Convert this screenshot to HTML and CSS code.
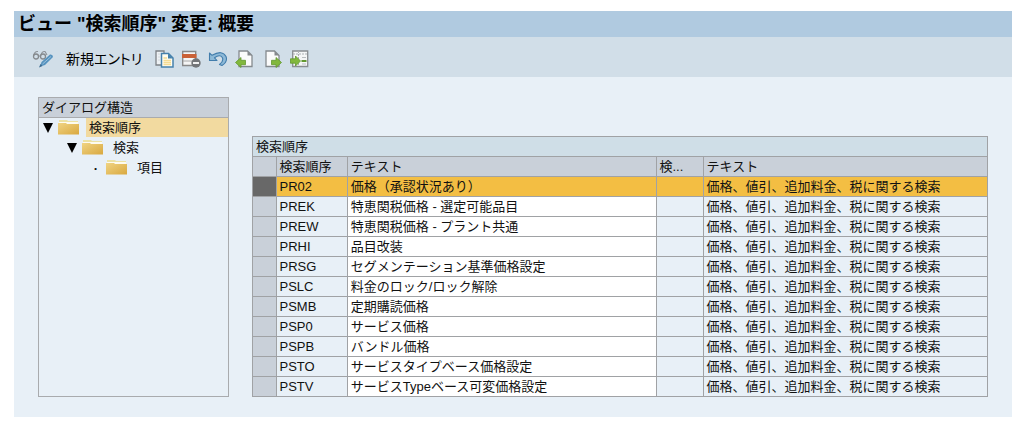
FILE: index.html
```html
<!DOCTYPE html>
<html lang="ja">
<head>
<meta charset="utf-8">
<title>ビュー "検索順序" 変更: 概要</title>
<link rel="stylesheet" href="styles.css">
</head>
<body>
<svg class="defs" aria-hidden="true">
  <linearGradient id="gold" x1="0" y1="0" x2="1" y2="1"><stop offset="0" stop-color="#f0d483"/><stop offset="1" stop-color="#d9a83f"/></linearGradient>
  <symbol id="folder" viewBox="0 0 21 17">
    <path d="M1 3V1h8l1 1h10v3H1z" fill="#ece2a4"/>
    <path d="M1 3h19v3H1z" fill="#fdfbf0"/>
    <path d="M0 4h8l1 1h12v10.500H0z" fill="url(#gold)"/>
  </symbol>
</svg>
<div class="window">
  <h1 class="title">ビュー "検索順序" 変更: 概要</h1>
  <div class="toolbar" role="toolbar">
    <button class="tool" aria-label="照会/変更">
      <svg width="22" height="20" viewBox="0 0 22 20" fill="none">
        <path d="M1.500 7Q2.500 2 6 2.500M9 6Q10 2 13 2.500L15 6M6.500 7h2" stroke="#8d9297" stroke-width="1.100"/>
        <circle cx="4" cy="7.500" r="2.500" stroke="#85898d" stroke-width="1.300"/><circle cx="11" cy="7.500" r="2.500" stroke="#85898d" stroke-width="1.300"/>
        <path d="M8 17.500l1.500-4.500L18 5.500q3-.5 3 2.500l-8 8z" fill="#5793bf"/><path d="M10.500 15L19 7.500" stroke="#9cc2dc"/><path d="M7 18.500l1.500-3.500 2 2z" fill="#3c6b91"/>
      </svg>
    </button>
    <button class="tool entry">新規エントリ</button>
    <div class="icons">
      <button class="tool" aria-label="コピー">
        <svg width="20" height="20" viewBox="0 0 20 20">
          <path d="M2 2h8v14H2z" fill="#edf1f4" stroke="#7d8287" stroke-width="1.300"/><path d="M4 5h2M4 8h2M4 11h2" stroke="#d3d8dc"/>
          <path d="M7.500 4.500h7L19 9v9H7.500z" fill="#fffdf0" stroke="#4681ac" stroke-width="1.500"/>
          <path d="M14 4.500V9.500h5z" fill="#4681ac"/><path d="M9.500 9h3.500M9.500 11.500h7.500M9.500 13.500h7.500M9.500 15.500h7.500" stroke="#f5dc93" stroke-width="1.500"/>
        </svg>
      </button>
      <button class="tool" aria-label="削除">
        <svg width="20" height="20" viewBox="0 0 20 20">
          <path d="M1.700 2.500h13v14h-13z" fill="#f5f5f5" stroke="#898989" stroke-width="1.400"/><path d="M1 5h14.500v4H1z" fill="#ca6137"/><path d="M2 12h12" stroke="#a8a8a8"/>
          <circle cx="15" cy="14" r="4.700" fill="#737578"/><path d="M12 14h6" stroke="#fff" stroke-width="1.800"/>
        </svg>
      </button>
      <button class="tool" aria-label="元に戻す">
        <svg width="20" height="20" viewBox="0 0 20 20">
          <path d="M1.500 4v7.500H9L6.500 8.800Q12 5 14.300 8.500Q16 12 11.500 15.500L14 16.500Q20 12.500 18 7.500Q14.500.5 4 6.300z" fill="#8db9d7" stroke="#427dac" stroke-width="1.100" stroke-linejoin="round"/>
        </svg>
      </button>
      <button class="tool" aria-label="前のエントリ">
        <svg width="20" height="20" viewBox="0 0 20 20">
          <path d="M4 2h8.500L17 6.500V17.500H4z" fill="#fbfbfb" stroke="#858a8e" stroke-width="1.300"/><path d="M12.500 2v4.500H17z" fill="#85898c"/>
          <path d="M.5 13.500L6 8.500v2.800h4.500v4.400H6v2.800z" fill="#82b83d" stroke="#62982f" stroke-width=".8"/>
        </svg>
      </button>
      <button class="tool" aria-label="次のエントリ">
        <svg width="20" height="20" viewBox="0 0 20 20">
          <path d="M4 2h8.500L17 6.500V17.500H4z" fill="#fbfbfb" stroke="#858a8e" stroke-width="1.300"/><path d="M12.500 2v4.500H17z" fill="#85898c"/>
          <path d="M19.500 13.500L14 8.500v2.800H9.500v4.400H14v2.800z" fill="#82b83d" stroke="#62982f" stroke-width=".8"/>
        </svg>
      </button>
      <button class="tool" aria-label="位置付け">
        <svg width="20" height="20" viewBox="0 0 20 20">
          <path d="M3.700 2h15v15.500h-15z" fill="#f5f6f7" stroke="#898d91" stroke-width="1.300"/><path d="M4 5h14M9.500 2v15" stroke="#abb0b4" stroke-dasharray="2 1"/>
          <path d="M13 8.500h4M13 15h4" stroke="#b9bdc0"/><path d="M12.500 12h5" stroke="#62982f" stroke-width="2"/>
          <path d="M11.500 12L6.500 7v2.800H1.500v4.400h5V17z" fill="#82b83d" stroke="#62982f" stroke-width=".8"/>
        </svg>
      </button>
    </div>
  </div>
  <main class="content">
    <section class="structure">
      <h2 class="structure-title">ダイアログ構造</h2>
      <ul class="tree">
        <li>
          <div class="node"><span class="marker"><svg width="10" height="10" viewBox="0 0 10 10"><path d="M0 0h10L5 10z"/></svg></span><svg class="folder"><use href="#folder"/></svg><span class="label selected">検索順序</span></div>
          <ul>
            <li>
              <div class="node"><span class="marker"><svg width="10" height="10" viewBox="0 0 10 10"><path d="M0 0h10L5 10z"/></svg></span><svg class="folder"><use href="#folder"/></svg><span class="label">検索</span></div>
              <ul>
                <li><div class="node"><span class="marker">·</span><svg class="folder"><use href="#folder"/></svg><span class="label">項目</span></div></li>
              </ul>
            </li>
          </ul>
        </li>
      </ul>
    </section>
    <table class="grid">
      <caption>検索順序</caption>
      <colgroup><col class="c-sel"><col class="c-code"><col class="c-text"><col class="c-key"><col class="c-desc"></colgroup>
      <thead><tr><th></th><th>検索順序</th><th>テキスト</th><th>検...</th><th>テキスト</th></tr></thead>
      <tbody>
        <tr class="active"><td></td><td>PR02</td><td>価格（承認状況あり）</td><td></td><td>価格、値引、追加料金、税に関する検索</td></tr>
        <tr><td></td><td>PREK</td><td>特恵関税価格 - 選定可能品目</td><td></td><td>価格、値引、追加料金、税に関する検索</td></tr>
        <tr><td></td><td>PREW</td><td>特恵関税価格 - プラント共通</td><td></td><td>価格、値引、追加料金、税に関する検索</td></tr>
        <tr><td></td><td>PRHI</td><td>品目改装</td><td></td><td>価格、値引、追加料金、税に関する検索</td></tr>
        <tr><td></td><td>PRSG</td><td>セグメンテーション基準価格設定</td><td></td><td>価格、値引、追加料金、税に関する検索</td></tr>
        <tr><td></td><td>PSLC</td><td>料金のロック/ロック解除</td><td></td><td>価格、値引、追加料金、税に関する検索</td></tr>
        <tr><td></td><td>PSMB</td><td>定期購読価格</td><td></td><td>価格、値引、追加料金、税に関する検索</td></tr>
        <tr><td></td><td>PSP0</td><td>サービス価格</td><td></td><td>価格、値引、追加料金、税に関する検索</td></tr>
        <tr><td></td><td>PSPB</td><td>バンドル価格</td><td></td><td>価格、値引、追加料金、税に関する検索</td></tr>
        <tr><td></td><td>PSTO</td><td>サービスタイプベース価格設定</td><td></td><td>価格、値引、追加料金、税に関する検索</td></tr>
        <tr><td></td><td>PSTV</td><td>サービスTypeベース可変価格設定</td><td></td><td>価格、値引、追加料金、税に関する検索</td></tr>
      </tbody>
    </table>
  </main>
</div>
</body>
</html>
```
FILE: styles.css
```css
* { box-sizing: border-box; }
body {
  margin: 11px 12px 12px 14px;
  background: #fff;
  color: #111;
  font-family: "Liberation Sans", "Noto Sans CJK JP", sans-serif;
  font-size: 13px;
  line-height: 19px;
}
.defs { position: absolute; width: 0; height: 0; }
.window { background: #e8f0f7; }
.title {
  margin: 0;
  padding: 0 4px;
  background: #b0cae0;
  color: #000;
  font-size: 18px;
  line-height: 26px;
}
.toolbar {
  display: flex;
  align-items: center;
  gap: 12px;
  height: 40px;
  padding: 4px 18px 0;
  background: #d1dee8;
}
.icons { display: flex; gap: 7px; }
.tool {
  display: flex;
  padding: 0;
  border: 0;
  background: none;
  color: #000;
  font: inherit;
}
.entry {
  font-size: 14px;
  line-height: 20px;
  font-feature-settings: "palt";
}
.content {
  display: flex;
  gap: 23px;
  padding: 20px 24px;
}
.structure {
  flex: 0 0 191px;
  border: 1px solid #a9abae;
}
.structure-title {
  margin: 0;
  padding: 0 3px;
  border-bottom: 1px solid #a9abae;
  background: #c9d0d9;
  font-size: 13px;
  font-weight: normal;
}
.tree, .tree ul { margin: 0; padding: 0; list-style: none; }
.tree ul { padding-left: 24px; }
.node { display: flex; height: 20px; padding-left: 3px; }
.marker {
  display: flex;
  align-items: center;
  justify-content: center;
  width: 12px;
  margin-right: 4px;
  font-weight: bold;
}
.folder { width: 21px; height: 17px; margin: 1px 7px 0 0; }
.label { flex: 1; height: 19px; padding-left: 3px; }
.selected { background: #f2daa0; }
.grid {
  flex: 1;
  align-self: flex-start;
  display: table;
  margin-top: 39px;
  border-collapse: collapse;
  table-layout: fixed;
}
.grid caption {
  padding: 0 3px;
  border: 1px solid #a0a2a5;
  border-bottom: 0;
  background: #cfdee7;
  text-align: left;
  line-height: 19px;
}
.grid th, .grid td {
  height: 20px;
  padding: 0 3px;
  border: 1px solid #a0a2a5;
  font-weight: normal;
  text-align: left;
  white-space: nowrap;
  overflow: hidden;
}
.grid th, .grid td:first-child { background: #c9d0d9; }
.grid td:nth-child(3) { background: #fff; }
.grid .active td { background: #f3be43; }
.grid .active td:first-child { background: #686868; }
.c-sel { width: 3.2%; }
.c-code { width: 9.7%; }
.c-text { width: 42%; }
.c-key { width: 6.4%; }
.c-desc { width: 38.7%; }
```
